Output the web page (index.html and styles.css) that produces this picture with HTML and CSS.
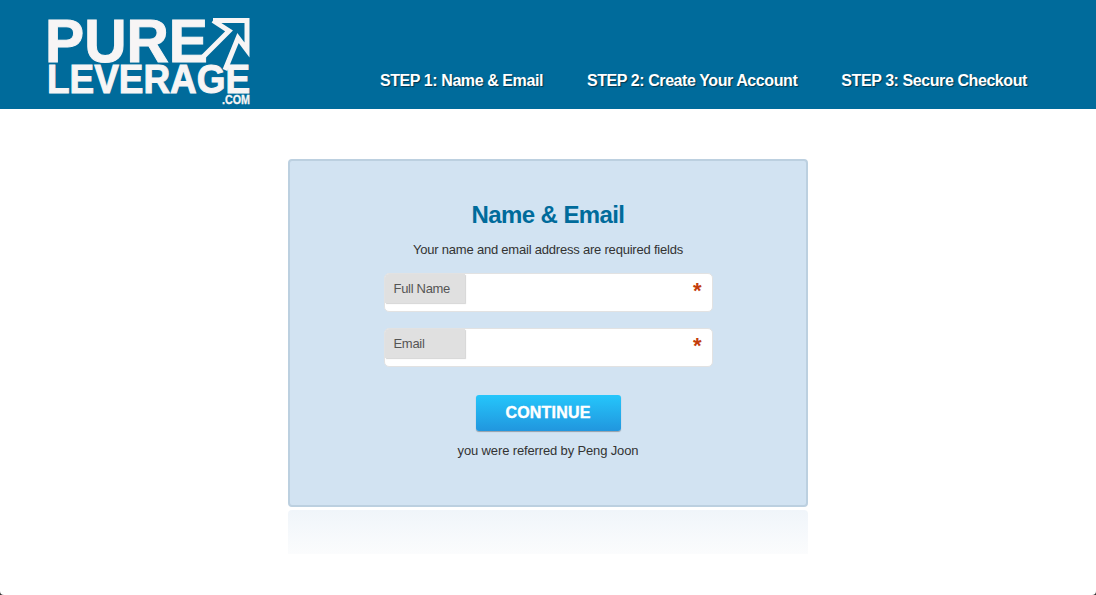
FILE: index.html
```html
<!DOCTYPE html>
<html>
<head>
    <link rel="stylesheet" href="styles.css">
</head>
<body>
<header class="top-bar">
    <svg class="logo" width="210" height="109" viewBox="0 0 210 109">
        <text class="logo-big" x="-4" y="62" textLength="163" lengthAdjust="spacingAndGlyphs">PURE</text>
        <text class="logo-mid" x="-2" y="93" textLength="203" lengthAdjust="spacingAndGlyphs">LEVERAGE</text>
        <text class="logo-small" x="173" y="104" textLength="28" lengthAdjust="spacingAndGlyphs">.COM</text>
        <path class="logo-arrow" d="M164 20.5H198V50L189 38L176 70M164 20.5L180 31L151 60" />
    </svg>
    <nav class="steps">
        <a href="#">STEP 1: Name &amp; Email</a>
        <a href="#">STEP 2: Create Your Account</a>
        <a href="#">STEP 3: Secure Checkout</a>
    </nav>
</header>
<main class="page">
    <div class="form-box">
        <h1>Name &amp; Email</h1>
        <p class="intro">Your name and email address are required fields</p>
        <div class="field">
            <label>Full Name</label>
            <span class="req">*</span>
        </div>
        <div class="field">
            <label>Email</label>
            <span class="req">*</span>
        </div>
        <button class="continue">CONTINUE</button>
        <p class="referred">you were referred by Peng Joon</p>
    </div>
    <div class="reflection"></div>
</main>
</body>
</html>
```

FILE: styles.css
```css
html, body {
    margin: 0;
    padding: 0;
}

html {
    background: #333;
}

body {
    height: 595px;
    background: #fff;
    border-radius: 0 0 4px 4px;
    font-family: "Liberation Sans", Arial, sans-serif;
    overflow: hidden;
}

.top-bar {
    height: 109px;
    background: #006b9b;
    display: flex;
    padding-left: 49px;
}

.logo {
    flex: none;
    overflow: visible;
}

.logo text {
    fill: #f7f5f5;
    stroke: #f7f5f5;
    stroke-width: 1px;
    font-weight: bold;
    font-family: "Liberation Sans", Arial, sans-serif;
}

.logo-big {
    font-size: 62px;
}

.logo-mid {
    font-size: 40px;
}

.logo .logo-small {
    font-size: 13px;
    stroke-width: .3px;
}

.logo-arrow {
    fill: none;
    stroke: #f7f5f5;
    stroke-width: 5;
}

.steps {
    display: flex;
    gap: 44px;
    margin-left: 121px;
    padding-top: 72px;
}

.steps a {
    color: #fff;
    font-size: 16px;
    font-weight: bold;
    line-height: 18px;
    letter-spacing: -0.42px;
    text-decoration: none;
    text-shadow: 1px 1px 1px rgba(0, 0, 0, .5);
}

.page {
    width: 520px;
    margin: 50px auto 0;
}

.form-box {
    box-sizing: border-box;
    height: 348px;
    background: #d2e3f2;
    border: 2px solid #bcd0e0;
    border-radius: 4px;
    display: flex;
    flex-direction: column;
    align-items: center;
    padding-top: 40px;
}

.form-box h1 {
    margin: 0;
    color: #006b9b;
    font-size: 24px;
    line-height: 28px;
    letter-spacing: -0.6px;
}

.intro {
    margin: 13px 0 0;
    color: #333;
    font-size: 13px;
    line-height: 16px;
    letter-spacing: -0.21px;
}

.field {
    box-sizing: border-box;
    width: 329px;
    height: 39px;
    margin-top: 16px;
    background: #fff;
    border: 1px solid #e2e2e2;
    border-radius: 5px;
    display: flex;
    justify-content: space-between;
}

.intro + .field {
    margin-top: 15px;
}

.field label {
    box-sizing: border-box;
    width: 80px;
    height: 29px;
    padding-left: 9px;
    background: #e0e0e0;
    border-radius: 4px 0 0 0;
    box-shadow: 1px 1px 1px #d5d5d5;
    color: #555;
    font-size: 13px;
    line-height: 29px;
    letter-spacing: -0.3px;
}

.req {
    margin-right: 10px;
    color: #c33c0c;
    font-size: 22px;
    font-weight: bold;
    line-height: 34px;
}

.continue {
    width: 145px;
    height: 36px;
    margin-top: 28px;
    padding: 0;
    border: 0;
    border-radius: 3px;
    background: linear-gradient(#25c6fb, #2196de);
    box-shadow: 0 1px 1px rgba(0, 0, 0, .3);
    color: #fff;
    font-family: inherit;
    font-size: 16px;
    font-weight: bold;
    letter-spacing: .2px;
    -webkit-text-stroke: .4px #fff;
}

.referred {
    margin: 12px 0 0;
    color: #333;
    font-size: 13px;
    line-height: 16px;
    letter-spacing: -0.14px;
}

.reflection {
    height: 44px;
    margin-top: 3px;
    border-radius: 4px 4px 0 0;
    background: linear-gradient(#f0f5fa, #fbfcfd);
}
```
